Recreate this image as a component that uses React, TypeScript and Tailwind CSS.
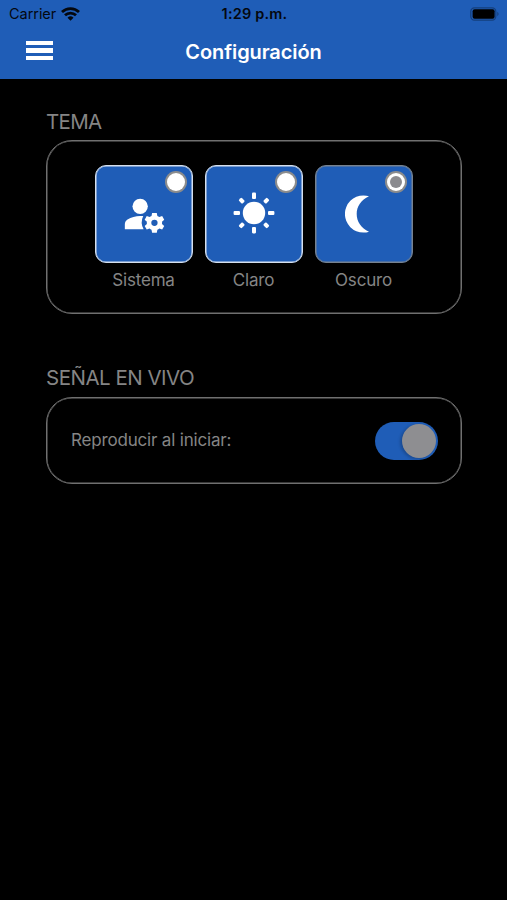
import type { ReactNode } from "react";

function ManageAccountIcon() {
  return (
    <svg className="h-[46px] w-[46px]" viewBox="0 0 24 24" fill="#fff">
      <circle cx="10" cy="8" r="4" />
      <path d="M11.6 13.1C11.1 13.03 10.5 13 10 13c-2.42 0-4.68.67-6.61 1.82-.88.52-1.39 1.5-1.39 2.53V20h9.8a7.4 7.4 0 0 1-.2-6.900Z" />
      <path
        fillRule="evenodd"
        transform="translate(17.45 16.6) scale(.94) translate(-16.5 -16)"
        d="M20.75 16c0-.22-.03-.42-.06-.63l1.24-1.1-1.15-1.99-1.57.53c-.32-.27-.68-.48-1.08-.63L17.8 10.55h-2.6l-.33 1.63c-.4.15-.76.36-1.08.63l-1.57-.53-1.15 1.99 1.24 1.1c-.03.21-.06.41-.06.63s.03.42.06.63l-1.24 1.1 1.15 1.99 1.57-.53c.32.27.68.48 1.08.63l.33 1.63h2.6l.33-1.63c.4-.15.76-.36 1.08-.63l1.57.53 1.15-1.99-1.24-1.1c.03-.21.06-.41.06-.63ZM16.5 17.75a1.75 1.75 0 1 1 0-3.5 1.75 1.75 0 0 1 0 3.5Z"
      />
    </svg>
  );
}

function SunIcon() {
  return (
    <svg className="h-[42px] w-[42px]" viewBox="0 0 42 42" fill="#fff">
      <circle cx="21" cy="21" r="11.2" />
      {[0, 45, 90, 135, 180, 225, 270, 315].map((angle) => (
        <rect
          key={angle}
          x="19"
          y={angle % 90 === 0 ? 0.6 : 1}
          width="4"
          height={angle % 90 === 0 ? 6.4 : 5.2}
          rx="1.1"
          transform={`rotate(${angle} 21 21)`}
        />
      ))}
    </svg>
  );
}

function MoonIcon() {
  return (
    <svg className="h-[38px] w-[24px]" viewBox="0 0 24 38" fill="#fff">
      <path d="M24 1.3Q21.5.4 18.5.4A18.6 18.6 0 0 0 18.5 37.6Q21.5 37.6 24 36.7C16 33 11.7 26.5 11.7 19S16 5 24 1.3Z" />
    </svg>
  );
}

function WifiIcon() {
  return (
    <svg className="ml-[5px] h-[14px] w-[19px]" viewBox="0 0 19 14" fill="none" stroke="#04080f" strokeWidth="2.8">
      <path d="M1 5a12.2 12.2 0 0 1 17 0" />
      <path d="M4 8.3a7.9 7.9 0 0 1 11 0" />
      <path d="M9.5 13.8 6.5 10.8a4.3 4.3 0 0 1 6 0Z" fill="#04080f" stroke="none" />
    </svg>
  );
}

function ThemeOption({ label, selected = false, children }: { label: string; selected?: boolean; children: ReactNode }) {
  return (
    <div className="flex w-[98px] flex-col items-center">
      <button
        className={`relative flex h-[98px] w-[98px] items-center justify-center rounded-[11px] border bg-[#1f5db7] ${selected ? "border-[#77828f] shadow-[inset_0_0_0_0.5px_#77828f]" : "border-[#d5dfed] shadow-[inset_0_0_0_0.5px_#d5dfed]"}`}
      >
        {children}
        <span className="absolute top-[5px] right-[5px] flex h-[22px] w-[22px] items-center justify-center rounded-full bg-[#8c8c8c]">
          <span className="flex h-[17.5px] w-[17.5px] items-center justify-center rounded-full bg-white">
            {selected && <span className="h-3 w-3 rounded-full bg-[#8b8b8f]" />}
          </span>
        </span>
      </button>
      <span className="mt-[5px] mr-[1px] whitespace-nowrap text-[17px] leading-6 tracking-[-0.2px] text-[#858585]">{label}</span>
    </div>
  );
}

export default function App() {
  return (
    <div className="h-[900px] w-[507px] overflow-hidden bg-black font-['Inter',sans-serif]">
      <header className="h-[79px] bg-[#1f5db7]">
        <div className="grid h-[27px] grid-cols-3 items-center pr-[7px] pl-[9px] text-[#04080f]">
          <div className="flex items-center">
            <span className="text-[14.5px] leading-5 tracking-[-0.05px]">Carrier</span>
            <WifiIcon />
          </div>
          <span className="text-center text-[14.5px] leading-5 font-semibold tracking-[0.2px]">1:29 p.m.</span>
          <svg className="h-[14px] w-[30px] justify-self-end" viewBox="0 0 30 14">
            <rect x="0.8" y="0.8" width="25" height="12.4" rx="3.6" fill="none" stroke="#153f7c" strokeWidth="1.2" />
            <rect x="2.6" y="2.2" width="22" height="9.6" rx="2" fill="#000" />
            <path d="M27.3 4.8q2.6 2.2 0 4.4Z" fill="#153f7c" />
          </svg>
        </div>
        <div className="grid h-[50px] grid-cols-[60px_1fr_60px] items-center">
          <div className="mb-[3px] ml-[26px] flex w-[27px] flex-col gap-[3px]">
            <span className="h-[4.5px] bg-white" />
            <span className="h-[4.5px] bg-white" />
            <span className="h-[4.5px] bg-white" />
          </div>
          <h1 className="text-center text-[20px] leading-6 font-semibold tracking-[-0.1px] text-white">Configuración</h1>
        </div>
      </header>
      <main className="pr-[45px] pl-[46px]">
        <h2 className="pt-[29px] text-[20.5px] leading-7 tracking-[-0.7px] text-[#858585]">TEMA</h2>
        <section className="mt-[4px] flex h-[174px] justify-center gap-3 rounded-[26px] border border-[#707070] pt-[24px] shadow-[inset_0_0_0_0.5px_#707070]">
          <ThemeOption label="Sistema">
            <ManageAccountIcon />
          </ThemeOption>
          <ThemeOption label="Claro">
            <div className="-mt-[2px]">
              <SunIcon />
            </div>
          </ThemeOption>
          <ThemeOption label="Oscuro" selected>
            <div className="mr-[14px]">
              <MoonIcon />
            </div>
          </ThemeOption>
        </section>
        <h2 className="mt-[50px] text-[20.5px] leading-7 tracking-[-0.5px] text-[#858585]">SEÑAL EN VIVO</h2>
        <section className="mt-[5px] flex h-[87px] items-center justify-between rounded-[26px] border border-[#707070] pr-[23px] pl-[24px] shadow-[inset_0_0_0_0.5px_#707070]">
          <span className="-mt-[2px] text-[17px] leading-6 tracking-[-0.18px] text-[#858585]">Reproducir al iniciar:</span>
          <button className="flex h-[38px] w-[63px] items-center justify-end rounded-full bg-[#1f5db7] pr-[2px]">
            <span className="h-[34px] w-[34px] rounded-full bg-[#8e8e91] shadow-[-2px_1px_3px_rgba(0,0,0,0.2)]" />
          </button>
        </section>
      </main>
    </div>
  );
}
